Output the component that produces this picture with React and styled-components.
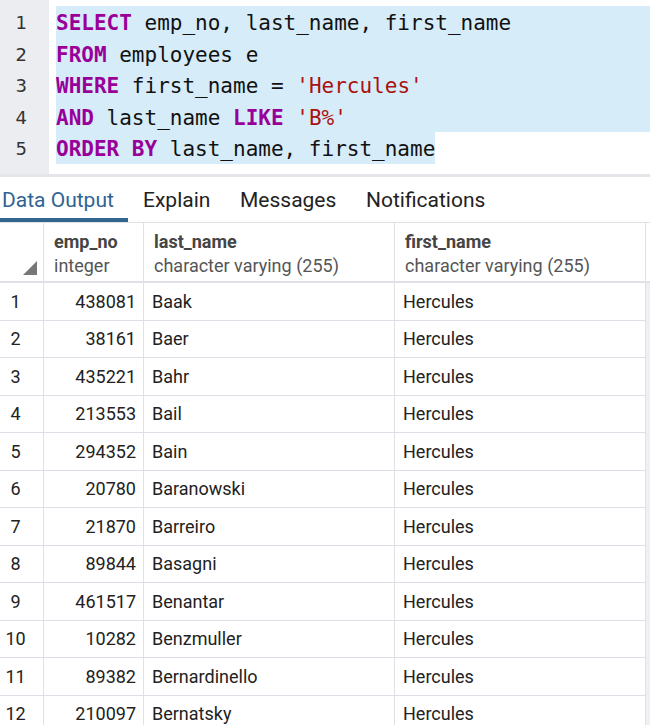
import React from 'react'
import styled, { createGlobalStyle } from 'styled-components'

const GlobalStyle = createGlobalStyle`
  html, body {
    margin: 0;
    padding: 0;
    background: #ffffff;
    overflow: hidden;
  }
  * { box-sizing: border-box; }
`

const Page = styled.div`
  width: 650px;
  height: 725px;
  overflow: hidden;
  font-family: Roboto, 'Liberation Sans', sans-serif;
  color: #222;
`

const Editor = styled.div`
  display: flex;
  height: 177px;
  border-bottom: 3px solid #e3e5e9;
`

const Gutter = styled.div`
  width: 49px;
  background: #ebedf1;
  padding-top: 6px;
`

const LineNo = styled.div`
  height: 31.5px;
  padding-top: 3px;
  line-height: 28.5px;
  width: 27px;
  text-align: right;
  font-size: 18px;
  color: #333;
  font-family: 'DejaVu Sans', sans-serif;
`

const Code = styled.div`
  flex: 1;
  padding-top: 6px;
  padding-left: 7px;
  font-family: 'DejaVu Sans Mono', monospace;
  font-size: 21px;
  color: #111;
`

const Line = styled.div`
  height: 31.5px;
  padding-top: 3px;
  line-height: 28.5px;
  white-space: pre;
  background: #d6ecf9;
  width: ${p => (p.$partial ? 'fit-content' : 'auto')};
`

const Kw = styled.span`
  color: #990099;
  font-weight: bold;
`

const Str = styled.span`
  color: #aa1111;
`

const Tabs = styled.div`
  display: flex;
  height: 46px;
  border-bottom: 1px solid #dfe1e6;
`

const Tab = styled.div`
  display: flex;
  align-items: center;
  padding: 4px 0 0 ${p => (p.$active ? '2px' : '15px')};
  font-size: 21px;
  color: ${p => (p.$active ? '#2f6395' : '#222')};
  border-bottom: 4px solid ${p => (p.$active ? '#326690' : 'transparent')};
  width: ${p => (p.$w ? `${p.$w}px` : 'auto')};
`

const Grid = styled.div`
  display: grid;
  grid-template-columns: 44px 100px 251px 251px 4px;
`

const Row = styled.div`
  display: contents;
`

const HeadCell = styled.div`
  height: 60px;
  border-bottom: 2px solid #dfe1e6;
  border-right: 1px solid #dfe1e6;
  padding: 8px 0 0 10px;
  position: relative;
`

const HeadName = styled.div`
  font-size: 18px;
  font-weight: bold;
  color: #454545;
  line-height: 22px;
`

const HeadType = styled.div`
  font-size: 18px;
  color: #555;
  line-height: 25px;
`

const Resize = styled.div`
  position: absolute;
  right: 6px;
  bottom: 6px;
  width: 0;
  height: 0;
  border-left: 14px solid transparent;
  border-bottom: 14px solid #777;
`

const Cell = styled.div`
  height: 37.5px;
  border-bottom: 1px solid #dcdfe5;
  border-right: 1px solid #dfe1e6;
  font-size: 18px;
  color: #222;
  display: flex;
  align-items: center;
  justify-content: ${p => (p.$num ? 'flex-end' : 'flex-start')};
  padding: ${p => (p.$num ? '0 7px 0 0' : '0 0 0 8px')};
`

const IdxCell = styled(Cell)`
  justify-content: center;
  padding: 0 12px 0 0;
`

const Scroll = styled.div`
  background: ${p => (p.$head ? '#fff' : '#eef0f4')};
  height: ${p => (p.$head ? '60px' : '37.5px')};
  border-bottom: ${p => (p.$head ? '2px solid #dfe1e6' : 'none')};
`

const rows = [
  [438081, 'Baak'],
  [38161, 'Baer'],
  [435221, 'Bahr'],
  [213553, 'Bail'],
  [294352, 'Bain'],
  [20780, 'Baranowski'],
  [21870, 'Barreiro'],
  [89844, 'Basagni'],
  [461517, 'Benantar'],
  [10282, 'Benzmuller'],
  [89382, 'Bernardinello'],
  [210097, 'Bernatsky'],
]

export default function App() {
  return (
    <Page>
      <GlobalStyle />
      <Editor>
        <Gutter>
          {[1, 2, 3, 4, 5].map(n => (
            <LineNo key={n}>{n}</LineNo>
          ))}
        </Gutter>
        <Code>
          <Line><Kw>SELECT</Kw> emp_no, last_name, first_name</Line>
          <Line><Kw>FROM</Kw> employees e</Line>
          <Line><Kw>WHERE</Kw> first_name = <Str>'Hercules'</Str></Line>
          <Line><Kw>AND</Kw> last_name <Kw>LIKE</Kw> <Str>'B%'</Str></Line>
          <Line $partial><Kw>ORDER BY</Kw> last_name, first_name</Line>
        </Code>
      </Editor>
      <Tabs>
        <Tab $active $w={128}>Data Output</Tab>
        <Tab $w={97}>Explain</Tab>
        <Tab $w={126}>Messages</Tab>
        <Tab>Notifications</Tab>
      </Tabs>
      <Grid>
        <Row>
          <HeadCell><Resize /></HeadCell>
          <HeadCell>
            <HeadName>emp_no</HeadName>
            <HeadType>integer</HeadType>
          </HeadCell>
          <HeadCell>
            <HeadName>last_name</HeadName>
            <HeadType>character varying (255)</HeadType>
          </HeadCell>
          <HeadCell>
            <HeadName>first_name</HeadName>
            <HeadType>character varying (255)</HeadType>
          </HeadCell>
          <Scroll $head />
        </Row>
        {rows.map(([no, last], i) => (
          <Row key={no}>
            <IdxCell>{i + 1}</IdxCell>
            <Cell $num>{no}</Cell>
            <Cell>{last}</Cell>
            <Cell>Hercules</Cell>
            <Scroll />
          </Row>
        ))}
      </Grid>
    </Page>
  )
}
